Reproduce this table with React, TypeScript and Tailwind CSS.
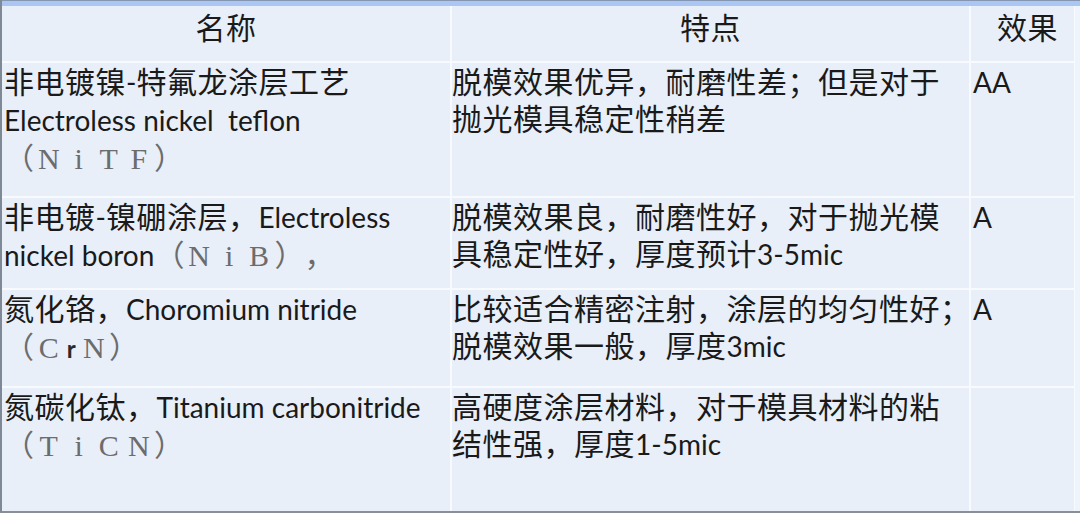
import React from "react";

const cjk = "font-['Lato','Noto_Sans_CJK_SC',sans-serif]";

// Latin run inside a CJK line (Gill Sans in the original; Lato is the nearest here)
function L({ children }: { children: React.ReactNode }) {
  return <span className="font-['Lato',sans-serif] text-[28px] tracking-normal">{children}</span>;
}

// full-width serif letter, like the SimSun ones in the slide
function Fw({ c, narrow = false }: { c: string; narrow?: boolean }) {
  if (narrow)
    return (
      <span className="inline-block w-[15px] text-center font-['Lato',sans-serif] text-[24px] font-bold text-[#2a2a2a]">
        {c}
      </span>
    );
  return (
    <span className="inline-block w-[30px] text-center font-['Liberation_Serif',serif] text-[30px] text-[#6c6c6c]">
      {c}
    </span>
  );
}

function P({ c }: { c: string }) {
  return <span className="inline-block w-[30px] text-[#6c6c6c]">{c}</span>;
}

const cell = "bg-[#e8eff9] whitespace-nowrap leading-[37px]";

export default function App() {
  return (
    <div className={`flex h-[513px] w-[1080px] flex-col overflow-hidden border-b-2 border-l-2 border-b-[#8a8f97] border-l-[#7f8996] bg-[#eef4fc] text-[30px] tracking-[0.5px] text-[#1a1a1a] ${cjk}`}>
      <div className="h-px shrink-0 bg-[#8597b0]" />
      <div className="h-[5px] shrink-0 bg-[#abc6f2]" />
      <div className="grid w-[1073px] grid-cols-[448px_517px_103px] grid-rows-[55px_133px_90px_96px_123px] gap-[2px] border-r border-r-[#f7faff] bg-[#f7faff]">
        <div className={`${cell} pt-[3px] text-center`}>名称</div>
        <div className={`${cell} pt-[3px] text-center`}>特点</div>
        <div className={`${cell} pt-[3px] pl-[10px] text-center`}>效果</div>

        <div className={`${cell} pl-[2px]`}>
          非电镀镍<L>-</L>特氟龙涂层工艺
          <br />
          <L>Electroless nickel&nbsp; teflon</L>
          <br />
          <P c="（" />
          <Fw c="N" />
          <Fw c="i" />
          <Fw c="T" />
          <Fw c="F" />
          <P c="）" />
        </div>
        <div className={cell}>
          脱模效果优异，耐磨性差；但是对于
          <br />
          抛光模具稳定性稍差
        </div>
        <div className={`${cell} pl-[2px]`}>
          <L>AA</L>
        </div>

        <div className={`${cell} pl-[2px]`}>
          非电镀<L>-</L>镍硼涂层，<L>Electroless</L>
          <br />
          <L>nickel boron</L>
          <P c="（" />
          <Fw c="N" />
          <Fw c="i" />
          <Fw c="B" />
          <P c="）" />
          <P c="，" />
        </div>
        <div className={cell}>
          脱模效果良，耐磨性好，对于抛光模
          <br />
          具稳定性好，厚度预计<L>3-5mic</L>
        </div>
        <div className={`${cell} pl-[2px]`}>
          <L>A</L>
        </div>

        <div className={`${cell} pl-[2px]`}>
          氮化铬，<L>Choromium nitride</L>
          <br />
          <P c="（" />
          <Fw c="C" />
          <Fw c="r" narrow />
          <Fw c="N" />
          <P c="）" />
        </div>
        <div className={cell}>
          比较适合精密注射，涂层的均匀性好；
          <br />
          脱模效果一般，厚度<L>3mic</L>
        </div>
        <div className={`${cell} pl-[2px]`}>
          <L>A</L>
        </div>

        <div className={`${cell} pl-[2px]`}>
          氮碳化钛，<L>Titanium carbonitride</L>
          <br />
          <P c="（" />
          <Fw c="T" />
          <Fw c="i" />
          <Fw c="C" />
          <Fw c="N" />
          <P c="）" />
        </div>
        <div className={cell}>
          高硬度涂层材料，对于模具材料的粘
          <br />
          结性强，厚度<L>1-5mic</L>
        </div>
        <div className={cell} />
      </div>
    </div>
  );
}
